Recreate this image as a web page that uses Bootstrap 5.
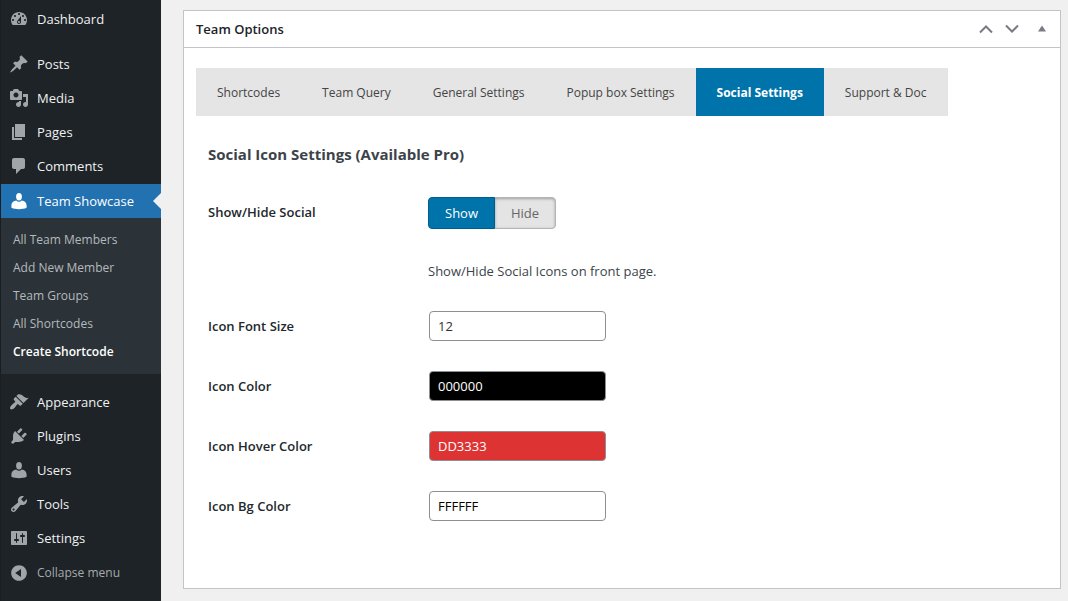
<!DOCTYPE html>
<html lang="en">
<head>
<meta charset="utf-8">
<meta name="viewport" content="width=device-width, initial-scale=1">
<title>Team Showcase – Create Shortcode</title>
<link href="https://cdn.jsdelivr.net/npm/bootstrap@5.3.0/dist/css/bootstrap.min.css" rel="stylesheet">
<style>
  body { font-family: "Segoe UI", "Open Sans", "Noto Sans", sans-serif; font-size: 13px; line-height: 20px; background: #f0f0f1; color: #3c434a; }
  .admin-menu { width: 161px; background: #1d2327; border-left: 1px solid #191e23; padding-top: 2px; }
  .menu-item { display: flex; align-items: center; gap: 8px; height: 34px; width: 100%; padding: 0 0 0 8px; color: #f0f0f1; text-decoration: none; background: none; border: 0; }
  .menu-item svg { width: 20px; height: 20px; fill: #a0a5aa; flex: none; }
  .menu-item.current { background: #2271b1; color: #fff; position: relative; margin-top: 1px; }
  .menu-item.current svg { fill: #fff; }
  .menu-item.current::after { content: ""; position: absolute; right: 0; top: 9px; border: 8px solid transparent; border-right-color: #f0f0f1; border-left-width: 0; }
  .menu-gap { margin-top: 11px; }
  .collapse-btn { color: #a7aaad; font-size: 12px; margin-top: 1px; }
  .sub-menu { background: #2c3338; padding: 8px 0; font-size: 12px; }
  .sub-menu a { display: block; padding: 4px 12px; color: #b4b9be; text-decoration: none; }
  .sub-menu a.current { color: #fff; font-weight: 600; }
  .page-body { padding: 10px 7px 12px 22px; }
  .postbox { background: #fff; border: 1px solid #c3c4c7; }
  .postbox-header { height: 37px; border-bottom: 1px solid #c3c4c7; padding: 0 5px 0 12px; }
  .postbox-header h2 { font-size: 13px; line-height: 20px; font-weight: 600; color: #1d2327; }
  .handle { border: 0; background: none; padding: 0; width: 26px; height: 36px; }
  .handle svg { display: block; margin: auto; }
  .postbox-body { padding: 20px 12px; }
  .tab-strip { background: #e5e5e5; font-size: 12px; width: fit-content; }
  .tab-strip .nav-link { padding: 15px 21px 13px; color: #444; border-radius: 0; }
  .tab-strip .nav-link.active { background: #0073aa; color: #fff; font-weight: 700; }
  .settings { padding: 27px 12px 0; }
  .settings h3 { font-size: 15px; line-height: 22px; font-weight: 700; color: #3c434a; margin-bottom: 32px; }
  .setting { display: grid; grid-template-columns: 220px 1fr; min-height: 30px; margin-bottom: 30px; }
  .setting-label { font-weight: 600; color: #23282d; line-height: 30px; }
  .field { width: 177px; height: 30px; border: 1px solid #8c8f94; border-radius: 4px; padding: 0 8px; font-size: 13px; color: #2c3338; margin-left: 1px; }
  .color-black { background: #000; color: #fff; }
  .color-red { background: #dd3333; color: #fff; }
  .color-white { background: #fff; color: #000; }
  .switch-group .btn { height: 32px; padding: 5px 16px; font-size: 13px; line-height: 20px; border: 1px solid #b4b4b4; border-radius: 4px; background: #e4e4e4; color: #666; box-shadow: inset 0 1px 3px rgba(0,0,0,.3); }
  .switch-group .btn-check:checked + .btn { background: #0073aa; border-color: #005d8c; color: #fff; box-shadow: none; }
</style>
</head>
<body>
<svg class="d-none">
  <symbol id="user-icon" viewBox="0 0 20 20"><ellipse cx="10" cy="5.700" rx="2.900" ry="3.700"/><path d="M7.300 9.600c.8.800 1.700 1.200 2.700 1.200s1.900-.4 2.700-1.200c2.800.2 4.900 2.400 4.900 5v2.200c-2.200 1-4.800 1.400-7.600 1.400s-5.400-.4-7.600-1.400v-2.200c0-2.600 2.100-4.800 4.900-5z"/></symbol>
</svg>
<div class="d-flex min-vh-100">
  <nav class="admin-menu flex-shrink-0" aria-label="Main menu">
    <a class="menu-item" href="#"><svg viewBox="0 0 20 20"><path d="M3.76 16h12.48c1.1-1.37 1.76-3.11 1.76-5 0-4.42-3.58-8-8-8s-8 3.58-8 8c0 1.89.66 3.63 1.76 5zM10 4c.55 0 1 .45 1 1s-.45 1-1 1-1-.45-1-1 .45-1 1-1zM6 6c.55 0 1 .45 1 1s-.45 1-1 1-1-.45-1-1 .45-1 1-1zm8 0c.55 0 1 .45 1 1s-.45 1-1 1-1-.45-1-1 .45-1 1-1zm-5.37 5.55L12 7v6c0 1.1-.9 2-2 2s-2-.9-2-2c0-.57.24-1.08.63-1.45zM4 10c.55 0 1 .45 1 1s-.45 1-1 1-1-.45-1-1 .45-1 1-1zm12 0c.55 0 1 .45 1 1s-.45 1-1 1-1-.45-1-1 .45-1 1-1zm-5 3c0-.55-.45-1-1-1s-1 .45-1 1 .45 1 1 1 1-.45 1-1z" fill-rule="evenodd"/></svg>Dashboard</a>
    <a class="menu-item menu-gap" href="#"><svg viewBox="0 0 20 20"><path d="M10.44 3.02l1.82-1.82 6.36 6.35-1.83 1.82c-1.05-.68-2.48-.57-3.41.36l-.75.75c-.92.93-1.04 2.35-.35 3.41l-1.83 1.82-2.41-2.41-2.8 2.79c-.42.42-3.38 2.71-3.8 2.29s1.86-3.39 2.28-3.81l2.79-2.79L4.1 9.36l1.83-1.82c1.05.69 2.48.57 3.4-.36l.75-.75c.93-.92 1.05-2.35.36-3.41z"/></svg>Posts</a>
    <a class="menu-item" href="#"><svg viewBox="0 0 20 20"><path fill-rule="evenodd" d="M13 11V4c0-.55-.45-1-1-1h-1.67L9 1H5L3.67 3H2c-.55 0-1 .45-1 1v7c0 .55.45 1 1 1h10c.55 0 1-.45 1-1zM7 4.5c1.38 0 2.5 1.12 2.5 2.5S8.38 9.5 7 9.5 4.5 8.38 4.5 7 5.62 4.5 7 4.5zM14 6h5v10.5c0 1.38-1.12 2.5-2.5 2.5S14 17.88 14 16.5s1.12-2.5 2.5-2.5c.17 0 .34.02.5.05V9h-3V6zm-4 8.05V13h2v3.5c0 1.38-1.12 2.5-2.5 2.5S7 17.88 7 16.5 8.12 14 9.5 14c.17 0 .34.02.5.05z"/></svg>Media</a>
    <a class="menu-item" href="#"><svg viewBox="0 0 20 20"><path d="M6 15V2h10v13H6zm-1 1h8v2H3V5h2v11z"/></svg>Pages</a>
    <a class="menu-item" href="#"><svg viewBox="0 0 20 20"><path d="M5 2h9c1.1 0 2 .9 2 2v7c0 1.1-.9 2-2 2h-2l-5 5v-5H5c-1.1 0-2-.9-2-2V4c0-1.1.9-2 2-2z"/></svg>Comments</a>
    <a class="menu-item current" href="#"><svg><use href="#user-icon"/></svg>Team Showcase</a>
    <div class="sub-menu">
      <a href="#">All Team Members</a>
      <a href="#">Add New Member</a>
      <a href="#">Team Groups</a>
      <a href="#">All Shortcodes</a>
      <a class="current" href="#" aria-current="page">Create Shortcode</a>
    </div>
    <a class="menu-item menu-gap" href="#"><svg viewBox="0 0 20 20"><path d="M14.48 11.06L7.41 3.99l1.5-1.5c.5-.56 2.3-.47 3.51.32 1.21.8 1.43 1.28 2.91 2.1 1.18.64 2.45 1.26 4.45.85zm-.71.71L6.7 4.7 4.93 6.47c-.39.39-.39 1.02 0 1.41l1.06 1.06c.39.39.39 1.03 0 1.42-.6.6-1.43 1.11-2.21 1.69-.35.26-.7.53-1.01.84C1.43 14.23.4 16.08 1.4 17.07c.99 1 2.84-.03 4.18-1.36.31-.31.58-.66.85-1.02.57-.78 1.08-1.61 1.69-2.21.39-.39 1.02-.39 1.41 0l1.06 1.06c.39.39 1.02.39 1.41 0z"/></svg>Appearance</a>
    <a class="menu-item" href="#"><svg viewBox="0 0 20 20"><path d="M13.11 4.36L9.87 7.6 8 5.73l3.24-3.24c.35-.34 1.05-.2 1.56.32.52.51.66 1.21.31 1.55zm-8 1.77l.91-1.12 9.01 9.01-1.19.84c-.71.71-2.63 1.16-3.82 1.16H6.14L4.9 17.26c-.59.59-1.54.59-2.12 0-.59-.58-.59-1.53 0-2.12l1.24-1.24v-3.88c0-1.13.4-3.19 1.09-3.89zm7.26 3.97l3.24-3.24c.34-.35 1.04-.21 1.55.31.52.51.66 1.21.31 1.55l-3.24 3.25z"/></svg>Plugins</a>
    <a class="menu-item" href="#"><svg><use href="#user-icon"/></svg>Users</a>
    <a class="menu-item" href="#"><svg viewBox="0 0 20 20"><path d="M16.68 9.77c-1.34 1.34-3.3 1.67-4.95.99l-5.41 6.52c-.99.99-2.59.99-3.58 0s-.99-2.59 0-3.57l6.52-5.42c-.68-1.65-.35-3.61.99-4.95 1.28-1.28 3.12-1.62 4.72-1.06l-2.89 2.89 2.82 2.82 2.86-2.87c.53 1.58.18 3.39-1.08 4.65zM3.81 16.21c.4.39 1.04.39 1.43 0 .4-.4.4-1.04 0-1.43-.39-.4-1.03-.4-1.43 0-.39.39-.39 1.03 0 1.43z" fill-rule="evenodd"/></svg>Tools</a>
    <a class="menu-item" href="#"><svg viewBox="0 0 20 20"><path fill-rule="evenodd" d="M18 16V4c0-.55-.45-1-1-1H3c-.55 0-1 .45-1 1v12c0 .55.45 1 1 1h14c.55 0 1-.45 1-1zM8 11h1c.55 0 1 .45 1 1s-.45 1-1 1H8v1.5c0 .28-.22.5-.5.5s-.5-.22-.5-.5V13H6c-.55 0-1-.45-1-1s.45-1 1-1h1V5.5c0-.28.22-.5.5-.5s.5.22.5.5V11zm5-2h-1c-.55 0-1-.45-1-1s.45-1 1-1h1V5.500c0-.28.22-.5.5-.5s.5.22.5.5V7h1c.55 0 1 .45 1 1s-.45 1-1 1h-1v5.500c0 .28-.22.5-.5.5s-.5-.22-.5-.5V9z"/></svg>Settings</a>
    <button class="menu-item collapse-btn" type="button"><svg viewBox="0 0 20 20"><path fill-rule="evenodd" d="M10 2.16c4.33 0 7.84 3.51 7.84 7.84s-3.51 7.84-7.84 7.84S2.16 14.33 2.16 10 5.71 2.16 10 2.16zm2 11.72V6.12L6.18 9.97z"/></svg>Collapse menu</button>
  </nav>

  <main class="page-body d-flex flex-grow-1">
    <section class="postbox flex-grow-1">
      <div class="postbox-header d-flex align-items-center justify-content-between">
        <h2 class="m-0">Team Options</h2>
        <div class="d-flex align-items-center">
          <button class="handle" type="button" aria-label="Move up"><svg width="16" height="16" viewBox="0 0 16 16" fill="none" stroke="#787c82" stroke-width="2"><path d="M2 11.5L8 5.5l6 6"/></svg></button>
          <button class="handle" type="button" aria-label="Move down"><svg width="16" height="16" viewBox="0 0 16 16" fill="none" stroke="#787c82" stroke-width="2"><path d="M2 4.5l6 6 6-6"/></svg></button>
          <button class="handle ms-1" type="button" aria-label="Toggle panel"><svg width="16" height="16" viewBox="0 0 16 16" fill="#787c82"><path d="M4 10.5L8 4.5l4 6z"/></svg></button>
        </div>
      </div>
      <div class="postbox-body">
        <ul class="nav tab-strip">
          <li class="nav-item"><a class="nav-link" href="#">Shortcodes</a></li>
          <li class="nav-item"><a class="nav-link" href="#">Team Query</a></li>
          <li class="nav-item"><a class="nav-link" href="#">General Settings</a></li>
          <li class="nav-item"><a class="nav-link" href="#">Popup box Settings</a></li>
          <li class="nav-item"><a class="nav-link active" href="#" aria-current="page">Social Settings</a></li>
          <li class="nav-item"><a class="nav-link" href="#">Support &amp; Doc</a></li>
        </ul>
        <form class="settings">
          <h3>Social Icon Settings (Available Pro)</h3>
          <div class="setting" role="group" aria-labelledby="social-label">
            <span class="setting-label" id="social-label">Show/Hide Social</span>
            <div>
              <div class="btn-group switch-group">
                <input class="btn-check" type="radio" name="social" id="social-show" checked>
                <label class="btn" for="social-show">Show</label>
                <input class="btn-check" type="radio" name="social" id="social-hide">
                <label class="btn" for="social-hide">Hide</label>
              </div>
              <p class="mb-0 mt-4 pt-2">Show/Hide Social Icons on front page.</p>
            </div>
          </div>
          <div class="setting">
            <label class="setting-label" for="font-size">Icon Font Size</label>
            <input class="field" id="font-size" type="text" value="12">
          </div>
          <div class="setting">
            <label class="setting-label" for="icon-color">Icon Color</label>
            <input class="field color-black" id="icon-color" type="text" value="000000">
          </div>
          <div class="setting">
            <label class="setting-label" for="hover-color">Icon Hover Color</label>
            <input class="field color-red" id="hover-color" type="text" value="DD3333">
          </div>
          <div class="setting">
            <label class="setting-label" for="bg-color">Icon Bg Color</label>
            <input class="field color-white" id="bg-color" type="text" value="FFFFFF">
          </div>
        </form>
      </div>
    </section>
  </main>
</div>
<script src="https://cdn.jsdelivr.net/npm/bootstrap@5.3.0/dist/js/bootstrap.bundle.min.js"></script>
</body>
</html>
